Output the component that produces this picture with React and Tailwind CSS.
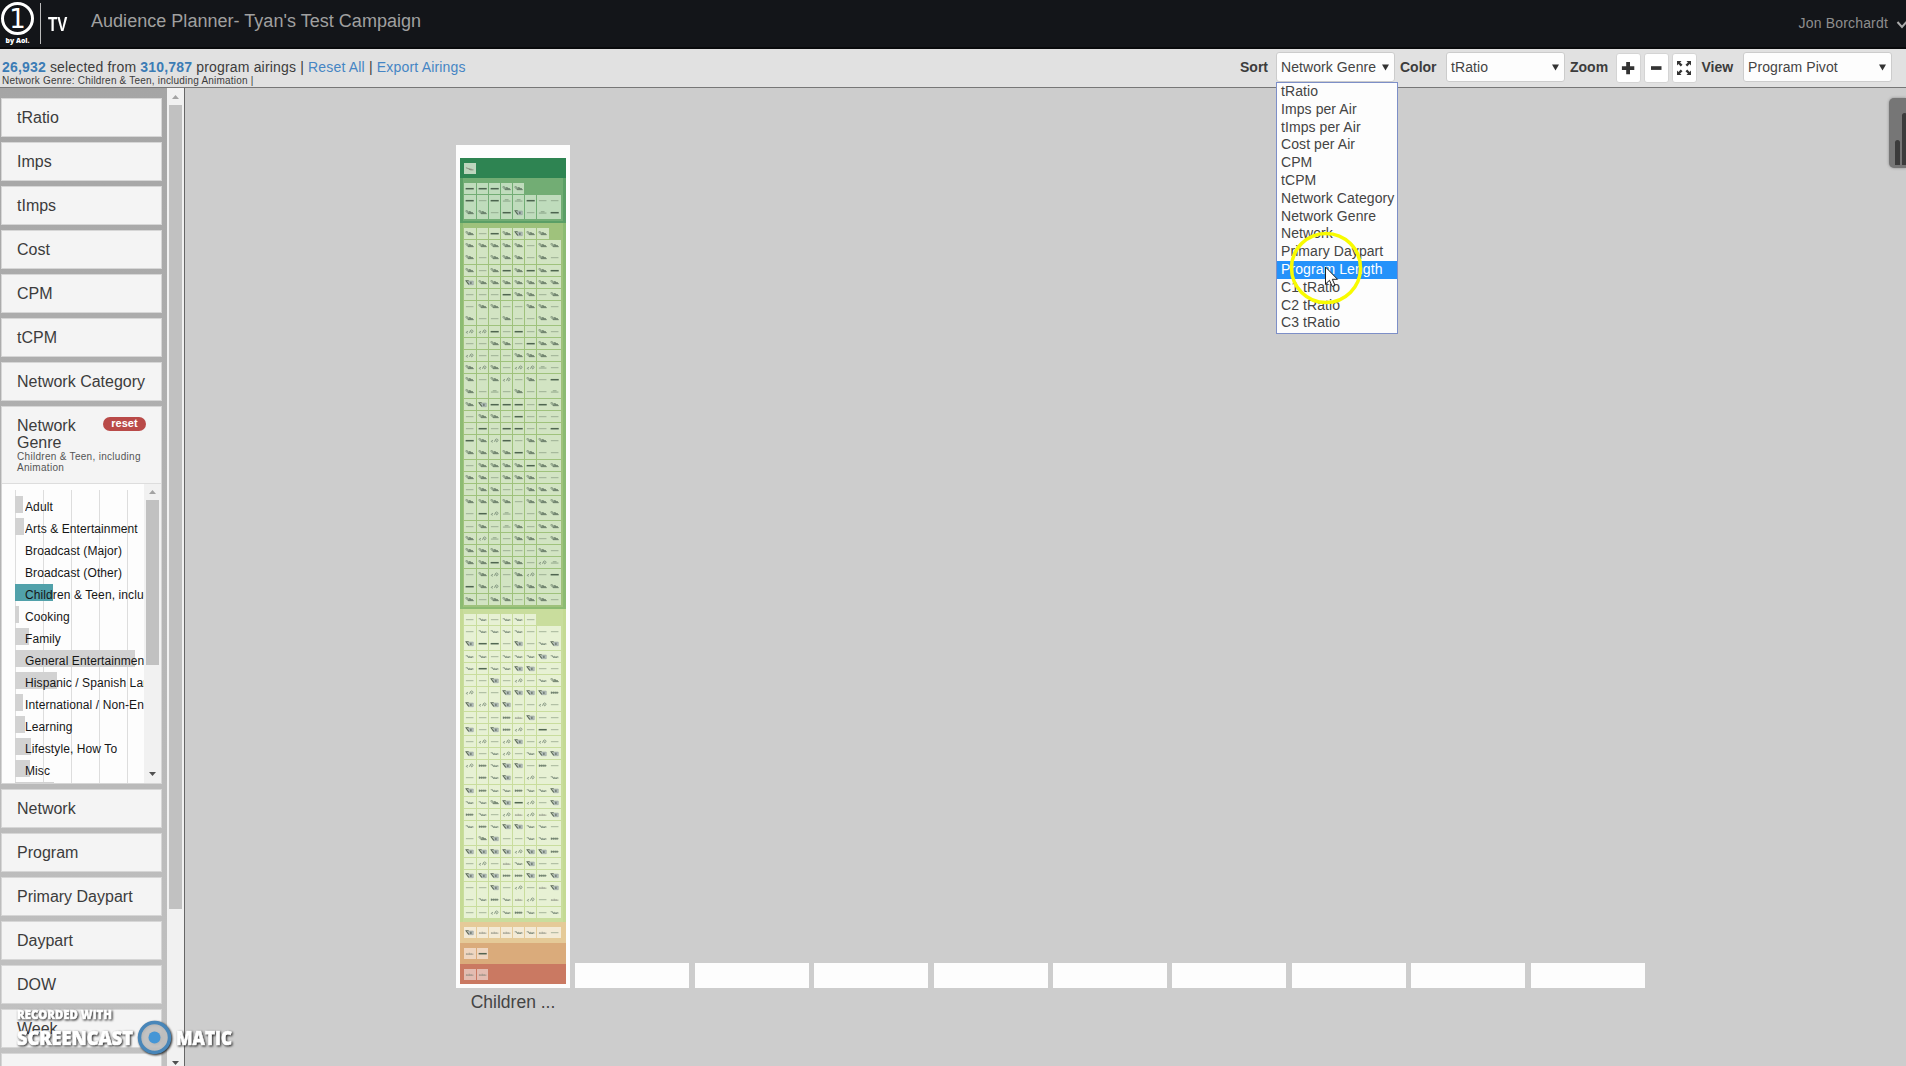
import React from "react";

const SORT_OPTIONS = [
  "tRatio", "Imps per Air", "tImps per Air", "Cost per Air", "CPM", "tCPM",
  "Network Category", "Network Genre", "Network", "Primary Daypart",
  "Program Length", "C1 tRatio", "C2 tRatio", "C3 tRatio",
];

const FILTERS_TOP = ["tRatio", "Imps", "tImps", "Cost", "CPM", "tCPM", "Network Category"];
const FILTERS_BOTTOM = ["Network", "Program", "Primary Daypart", "Daypart", "DOW", "Week", ""];

const GENRES = [
  ["Adult", 8], ["Arts & Entertainment", 9], ["Broadcast (Major)", 0],
  ["Broadcast (Other)", 0], ["Children & Teen, including Animation", 38, true],
  ["Cooking", 4], ["Family", 14], ["General Entertainment", 120],
  ["Hispanic / Spanish Language", 42], ["International / Non-English", 8],
  ["Learning", 10], ["Lifestyle, How To", 16], ["Misc", 15], ["", 39],
];

// Each letter names the thumbnail mark drawn in one program tile.
const GROUPS = [
  { box: "h-[20px] bg-[#2e8452]", tile: "bg-[#bdd5bd]", rows: ["r"] },
  { box: "h-[45px] bg-[#72ad74] border-x-[3px] border-b-2 border-[#5b9f66]", tile: "bg-[#bfdcbc]", rows: ["dddww", "dtdmmdtt", "wwtdbtmd"] },
  {
    box: "h-[386px] bg-[#9fc27c] border-x-[3px] border-b-2 border-[#8cbb72]", tile: "bg-[#d2e4c3]",
    rows: [
      "wtdwbww", "wwwwwtww", "wtwwwtwt", "wtwdwdwd", "bwwwwwww", "tttdwwtw", "twwttwwt", "wttwttww",
      "ccdtdtwt", "ttwwtdww", "ctttwwwt", "wcwtccmt", "wtwctwtd", "wtmtwttm", "wbdddtdw", "twwtdttt",
      "tdtddttd", "dwcdtwwt", "wwwwdwtt", "twwwwdww", "wwtwwwtt", "twwttwww", "wwwwtwww", "tdcmttww",
      "twtmwtww", "wcmtwwtw", "wwwtttwt", "wwdwwtcm", "twctwctd", "dwctwwww", "wtwwtwwt",
    ],
  },
  {
    box: "h-[313px] bg-[#c9dd9d] border-x-[3px] border-[#c4da94]", tile: "bg-[#e7f1d4]",
    rows: [
      "thtHht", "thhhhttt", "bddtbthb", "hhthhhbh", "hdhhbbtt", "ttbtcthw", "cttbbbbk", "bcbbttct",
      "tttknbtt", "btbkctdt", "tctcbtct", "bthcthbb", "ckhbbtkt", "tkhbtcth", "bkhhkhhb", "hhwbdctb",
      "khtcncnb", "hkhbbhht", "twbtthhk", "bbbbcbbk", "tctnhbtt", "bbbkkbkb", "ttbtctnb", "thkhnctn", "ttchkhth",
    ],
  },
  { box: "h-[21px] bg-[#e5ca98]", tile: "bg-[#f3ead6]", rows: ["bnnnhhnt"] },
  { box: "h-[20.5px] bg-[#daab7b]", tile: "bg-[#efd6c1]", rows: ["nd"] },
  { box: "h-[20.5px] bg-[#ca7962]", tile: "bg-[#e3bcb1]", rows: ["nn"] },
];

function Mark({ kind }) {
  switch (kind) {
    case "d":
      return <path d="M1.700 6h8.600" stroke="#39503d" strokeWidth="1.600" opacity=".85" />;
    case "t":
      return <path d="M2 6h8" stroke="#6c8268" strokeWidth=".8" opacity=".7" />;
    case "m":
      return <path d="M2 6.400h8M4 5h4" stroke="#5c735d" strokeWidth=".8" opacity=".7" />;
    case "w":
      return <path d="M1.600 4.300l2-.3l1.200 1.600l1-.8l1.800.6M2.800 5.200l1.500 1.800h6M5 6h4.500" fill="none" stroke="#3c5142" strokeWidth=".95" opacity=".75" />;
    case "b":
      return (
        <g opacity=".8">
          <path d="M5 4.300h4.800v3.800h-4.800z" fill="#a9b3b8" stroke="#7d8a8c" strokeWidth=".6" />
          <path d="M1.500 4h3.500M2.500 4.500l2.500 3.200M7.300 5v2.400" fill="none" stroke="#36453b" strokeWidth="1.200" />
        </g>
      );
    case "c":
      return <path d="M4.200 5.800c-2 -.4 -2.4 2 -.2 1.7M5.500 7c1.500 -.4 .6 -2.500 2.200 -2.800s2.600 1.700 1 2.800c-1 .5 -1.800 -.5 -1 -1.500" fill="none" stroke="#5d7161" strokeWidth=".8" opacity=".85" />;
    case "k":
      return <path d="M2 6h8M2.500 4.800v2.400M4.500 4.800v2.400M6.500 4.800v2.400M8.500 4.800v2.400" stroke="#4c5f50" strokeWidth="1" opacity=".8" />;
    case "n":
      return <path d="M2 6.500h8M3 5.500v1.500M5.500 5v2M7.500 5.500v1.500" stroke="#7c8074" strokeWidth="1" opacity=".7" />;
    case "r":
      return <path d="M2 5l3 1l2 1.200h3M5 6.500h3" fill="none" stroke="#7a7a6c" strokeWidth="1" opacity=".85" />;
    default:
      return <path d="M1.800 5h2l1 1.600l1.300-1.200l1.200 1.200l1.200-.8l1.700.6M3.500 5.800l1.500 1h4" fill="none" stroke="#53675a" strokeWidth=".8" opacity=".75" />;
  }
}

function Group({ box, tile, rows }) {
  return (
    <div className={`flex w-full justify-center pt-[5px] ${box}`}>
      <div className="w-[97.2px]">
        {rows.map((row, r) => (
          <div key={r} className="flex h-[12.2px]">
            {row.split("").map((kind, c) => (
              <div key={c} className="h-full w-[12.15px] pr-[0.8px] pb-[0.8px]">
                <svg viewBox="0 0 12 12" preserveAspectRatio="none" className={`block h-full w-full ${tile}`}>
                  <Mark kind={kind} />
                </svg>
              </div>
            ))}
          </div>
        ))}
      </div>
    </div>
  );
}

function Select({ children, className }) {
  return (
    <div className={`flex h-[30px] items-center justify-between rounded-[3px] border border-[#ccc] bg-[#fdfdfd] pr-[5px] pl-1 text-[14px] text-[#444] ${className}`}>
      <span className="tracking-[0.08px] whitespace-nowrap">{children}</span>
      <svg width="7" height="7" viewBox="0 0 7 7"><path d="M0 .5h7l-3.500 6z" fill="#333" /></svg>
    </div>
  );
}

function ZoomButton({ children, className = "" }) {
  return (
    <div className={`flex h-[30px] w-[25px] items-center justify-center rounded-[3px] border border-[#d4d4d4] bg-white ${className}`}>
      <svg width="16" height="16" viewBox="0 0 16 16" fill="#333">{children}</svg>
    </div>
  );
}

function Arrow({ up, dark }) {
  return (
    <svg width="7" height="4" viewBox="0 0 7 4">
      <path d={up ? "M0 4h7l-3.500-4z" : "M0 0h7l-3.500 4z"} fill={dark ? "#505050" : "#a3a3a3"} />
    </svg>
  );
}

function FilterItem({ label }) {
  return (
    <div className="h-[39px] w-[161px] shrink-0 border border-[#d6d6d6] bg-[#f4f4f4] pl-[15px] text-[16px] leading-[38px] whitespace-nowrap text-[#3c3c3c]">
      {label}
    </div>
  );
}

function GenrePanel() {
  return (
    <div className="flex h-[378px] w-[161px] shrink-0 flex-col border border-[#d6d6d6] bg-[#f4f4f4]">
      <div className="h-[77px] shrink-0 border-b border-[#ddd] pt-[10px] pl-[15px] text-[#3c3c3c]">
        <div className="flex h-[34px] justify-between pr-[15px]">
          <div className="w-[70px] text-[16px] leading-[17px]">Network Genre</div>
          <div className="h-[14px] w-[43px] rounded-full bg-[#b94a48] text-center text-[11px] leading-[13px] font-bold text-white">reset</div>
        </div>
        <div className="text-[10px] leading-[11px] tracking-[0.3px] whitespace-nowrap text-[#555]">
          Children &amp; Teen, including<br />Animation
        </div>
      </div>
      <div className="flex min-h-0 flex-1">
        <div className="relative w-[142px] overflow-hidden bg-[#fdfdfd] pt-3 pl-[13px]">
          <div className="absolute top-[6px] bottom-0 left-[13px] flex gap-[27px]">
            {[0, 1, 2, 3, 4].map((i) => <div key={i} className="w-px bg-[#ddd]" />)}
          </div>
          {GENRES.map(([label, width, active], i) => (
            <div key={i} className="relative h-[22px]">
              <div className={`h-[17px] ${active ? "bg-[#51a1aa]" : "bg-[#d2d2d2]"}`} style={{ width }} />
              <div className="absolute top-px left-[10px] w-[119px] overflow-hidden text-[12px] leading-[21px] tracking-[0.1px] whitespace-nowrap text-[#161616]">{label}</div>
            </div>
          ))}
        </div>
        <div className="flex w-[17px] flex-col items-center bg-[#f1f1f1] pt-[6px] pb-[7px]">
          <Arrow up />
          <div className="mt-[6px] h-[165px] w-[13px] bg-[#c1c1c1]" />
          <div className="flex-1" />
          <Arrow dark />
        </div>
      </div>
    </div>
  );
}

function Header() {
  return (
    <div className="flex h-[49px] shrink-0 border-b-2 border-[#090a0c] bg-[#131519]">
      <div className="w-[35px]">
        <svg width="35" height="47" viewBox="0 0 35 47">
          <circle cx="17.500" cy="18.500" r="15" fill="none" stroke="#fff" strokeWidth="3" />
          <text x="17.500" y="28" textAnchor="middle" fontFamily="DejaVu Sans" fontSize="26" fill="#fff">1</text>
          <text x="17.500" y="43" textAnchor="middle" fontFamily="Open Sans" fontWeight="800" fontSize="7" fill="#fff" textLength="24" lengthAdjust="spacingAndGlyphs">by Aol.</text>
        </svg>
      </div>
      <div className="mt-[3px] ml-[5px] h-[41px] w-px bg-[#bbb]" />
      <div className="mt-[11px] ml-[7px] w-[18px] origin-left scale-x-[0.72] font-['Liberation_Sans'] text-[21px] leading-[25px] font-bold text-white">TV</div>
      <div className="ml-[25px] text-[18px] leading-[43px] tracking-[0.03px] whitespace-nowrap text-[#a0a0a0]">Audience Planner- Tyan's Test Campaign</div>
      <div className="flex-1" />
      <div className="text-[14px] leading-[47px] tracking-[0.18px] whitespace-nowrap text-[#8e8e8e]">Jon Borchardt</div>
      <svg className="mt-[20px] ml-[8px]" width="10" height="10" viewBox="0 0 10 10"><path d="M1.500 2l4.500 5l4.500-5" fill="none" stroke="#aaa" strokeWidth="2" /></svg>
    </div>
  );
}

function Toolbar() {
  return (
    <div className="flex h-[39px] shrink-0 border-b border-[#777] bg-[#e1e1e1] pl-[2px] text-[#3c3c3c]">
      <div className="w-[1238px] pt-[9px] whitespace-nowrap">
        <div className="text-[14px] leading-[18px] tracking-[0.175px]">
          <b className="text-[#3b7cb5]">26,932</b> selected from <b className="text-[#3b7cb5]">310,787</b> program airings |{" "}
          <span className="text-[#4585c4]">Reset All</span> | <span className="text-[#4585c4]">Export Airings</span>
        </div>
        <div className="text-[10px] leading-[10px] tracking-[0.2px]">Network Genre: Children &amp; Teen, including Animation |</div>
      </div>
      <div className="flex pt-[3px] text-[14px] font-bold">
        <div className="w-[36px] leading-[30px]">Sort</div>
        <div className="relative font-normal">
          <Select className="w-[119px]">Network Genre</Select>
          <div className="absolute top-[30px] left-0 z-10 h-[252px] w-[122px] border border-[#7d8fc8] bg-[#fdfdfd] text-[14px] tracking-[0.08px] text-[#444]">
            {SORT_OPTIONS.map((o) => (
              <div
                key={o}
                className={`h-[17.800px] pl-1 leading-[17.800px] whitespace-nowrap ${o === "Program Length" ? "bg-[#2492fa] text-white" : ""}`}
              >
                {o}
              </div>
            ))}
          </div>
        </div>
        <div className="ml-[5px] w-[46px] leading-[30px]">Color</div>
        <Select className="w-[119px] font-normal">tRatio</Select>
        <div className="ml-[5px] w-[45.500px] leading-[30px]">Zoom</div>
        <div className="flex gap-[3px] pt-[1px]">
          <ZoomButton><path d="M6.200 2h3.800v4.200h4.300v3.700h-4.300v4.300h-3.800v-4.300h-4.300v-3.700h4.300z" /></ZoomButton>
          <ZoomButton><path d="M3 6.200h10.500v3.700h-10.500z" /></ZoomButton>
          <ZoomButton>
            <path d="M1 1h4.500l-1.400 1.400 2.400 2.400-1.700 1.700-2.400-2.400-1.400 1.400zM15 1h-4.500l1.400 1.400-2.400 2.400 1.700 1.700 2.400-2.400 1.400 1.400zM1 15h4.500l-1.400-1.400 2.400-2.400-1.700-1.700-2.400 2.400-1.400-1.400zM15 15h-4.500l1.400-1.400-2.400-2.400 1.700-1.700 2.400 2.400 1.400-1.400z" />
          </ZoomButton>
        </div>
        <div className="ml-[5px] w-[41.500px] leading-[30px]">View</div>
        <Select className="w-[149px] font-normal">Program Pivot</Select>
      </div>
    </div>
  );
}

function Watermark() {
  return (
    <div className="absolute top-[1005px] left-[16px] z-20 font-['Open_Sans'] font-extrabold text-white">
      <svg width="222" height="52" viewBox="0 0 222 52" className="drop-shadow-[1px_1px_1px_#222]" fill="#fff">
        <g stroke="#fff" strokeWidth=".6">
          <text x="1" y="14" fontSize="13" textLength="95" lengthAdjust="spacingAndGlyphs">RECORDED WITH</text>
          <text x="1" y="39.500" fontSize="18.500" textLength="116" lengthAdjust="spacingAndGlyphs">SCREENCAST</text>
          <text x="160" y="39.500" fontSize="18.500" textLength="56" lengthAdjust="spacingAndGlyphs">MATIC</text>
        </g>
        <circle cx="138.500" cy="32.500" r="15" fill="#e6e6e6" fillOpacity=".75" stroke="#4886b9" strokeWidth="3.500" />
        <circle cx="138.500" cy="32.500" r="6" fill="#4596d6" />
      </svg>
    </div>
  );
}

export default function App() {
  return (
    <div className="relative flex h-[1066px] w-[1906px] flex-col overflow-hidden bg-[#cdcdcd] font-['Liberation_Sans',sans-serif]">
      <Header />
      <Toolbar />
      <div className="flex min-h-0 flex-1">
        <div className="flex w-[185px] shrink-0 overflow-hidden border-r border-[#666]">
          <div className="flex w-[167px] flex-col gap-[5px] bg-linear-to-b from-[#a5a5a5] via-[#b4b4b4] to-[#c2c2c2] pt-[10px] pl-px">
            {FILTERS_TOP.map((f) => <FilterItem key={f} label={f} />)}
            <GenrePanel />
            {FILTERS_BOTTOM.map((f) => <FilterItem key={f} label={f} />)}
          </div>
          <div className="flex w-[17px] flex-col items-center bg-[#f1f1f1] pt-[7px] pb-px">
            <Arrow up />
            <div className="mt-[6px] h-[804px] w-[13px] bg-[#c1c1c1]" />
            <div className="flex-1" />
            <Arrow dark />
          </div>
        </div>
        <div className="flex min-w-0 flex-1 justify-between">
          <div className="pt-[57px] pl-[271px]">
            <div className="flex items-end gap-[5.400px]">
              <div className="h-[843px] w-[114px] bg-[#fdfdfd] px-1 pt-[13px]">
                {GROUPS.map((g, i) => <Group key={i} {...g} />)}
              </div>
              {[1, 2, 3, 4, 5, 6, 7, 8, 9].map((i) => <div key={i} className="h-[25px] w-[114px] bg-[#fdfdfd]" />)}
            </div>
            <div className="w-[114px] text-center text-[17.500px] leading-[28px] text-[#444]">Children ...</div>
          </div>
          <div className="mt-[10px] flex h-[70px] w-[17px] items-end gap-[2px] overflow-hidden rounded-l-[5px] bg-[#767676] pb-[3px] pl-[6px] shadow-[0_0_3px_#888]">
            <div className="h-[25px] w-[5px] shrink-0 rounded-t-sm bg-[#3b3b3b]" />
            <div className="h-[52px] w-[5px] shrink-0 rounded-t-sm bg-[#3b3b3b]" />
          </div>
        </div>
      </div>
      <Watermark />
      <svg className="absolute top-[230px] left-[1288px] z-20" width="76" height="76" viewBox="0 0 76 76">
        <circle cx="38" cy="38" r="34.500" fill="none" stroke="#f8fb00" strokeWidth="3.500" />
        <path d="M37.500 37v17l4-3.700 2.700 6.200 2.800-1.200-2.700-6h5.200z" fill="#fff" stroke="#222" strokeWidth="1" />
      </svg>
    </div>
  );
}
